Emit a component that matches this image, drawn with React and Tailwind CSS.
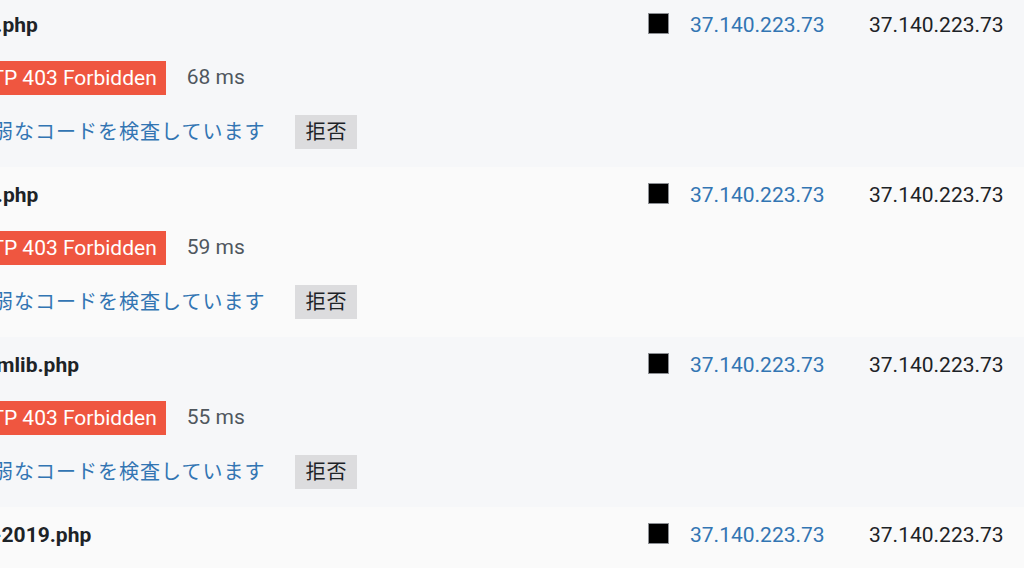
const ROWS = [
  { file: '/ss.php', ms: '68 ms', bg: 'bg-[#f6f7f9]' },
  { file: '/sa.php', ms: '59 ms', bg: 'bg-[#fafafa]' },
  { file: '/ssmlib.php', ms: '55 ms', bg: 'bg-[#f6f7f9]' },
  { file: '/sr-2019.php', ms: '52 ms', bg: 'bg-[#fafafa]' },
]

function Row({ r }) {
  return (
    <div className={`flex h-[170px] ${r.bg}`}>
      <div className="w-[686px] shrink-0 flex flex-col pt-[14px]">
        <div className="pl-[5px] h-[28px] leading-[28px] text-[21px] font-bold text-[#1d2327] whitespace-nowrap">{r.file}</div>
        <div className="mt-[22px] flex items-center h-[34px]">
          <span className="-ml-[7px] h-[34px] leading-[34px] px-[9px] bg-[#ef5640] text-white text-[21px] whitespace-nowrap">HTTP 403 Forbidden</span>
          <span className="ml-[21px] text-[21px] text-[#50575e]">{r.ms}</span>
        </div>
        <div className="mt-[20px] flex items-center h-[34px] pl-[10px]">
          <span className="text-[20px] tracking-[1px] text-[#3275b3] whitespace-nowrap">脆弱なコードを検査しています</span>
          <span className="ml-[30px] h-[34px] leading-[34px] px-[10px] bg-[#dcdcde] text-[20px] tracking-[1px] text-[#1d2327]">拒否</span>
        </div>
      </div>
      <div className="w-[42px] shrink-0 pt-[16px]">
        <div className="w-[21px] h-[21px] bg-black border border-[#8c8f94]" />
      </div>
      <div className="w-[179px] shrink-0 pt-[14px] leading-[28px] text-[21px] text-[#3275b3]">37.140.223.73</div>
      <div className="pt-[14px] leading-[28px] text-[21px] text-[#1d2327]">37.140.223.73</div>
    </div>
  )
}

export default function App() {
  return (
    <div className="w-[1024px] h-[568px] overflow-hidden bg-[#fafafa] font-['Roboto','Noto_Sans_CJK_JP',sans-serif]">
      <div className="-ml-[38px] -mt-[3px] w-[1062px]">
        {ROWS.map((r, i) => <Row key={i} r={r} />)}
      </div>
    </div>
  )
}
